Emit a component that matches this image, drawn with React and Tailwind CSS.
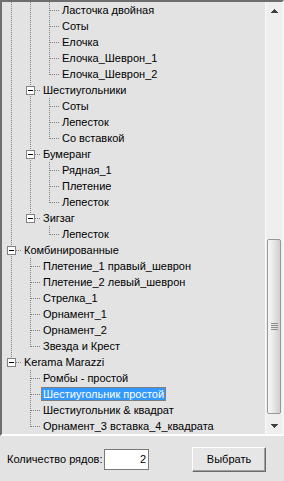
const rows = [
  [2, "Ласточка двойная", [1, 1], "mid"],
  [2, "Соты", [1, 1], "mid"],
  [2, "Елочка", [1, 1], "mid"],
  [2, "Елочка_Шеврон_1", [1, 1], "mid"],
  [2, "Елочка_Шеврон_2", [1, 1], "last"],
  [1, "Шестиугольники", [1], "mid", true],
  [2, "Соты", [1, 1], "mid"],
  [2, "Лепесток", [1, 1], "mid"],
  [2, "Со вставкой", [1, 1], "last"],
  [1, "Бумеранг", [1], "mid", true],
  [2, "Рядная_1", [1, 1], "mid"],
  [2, "Плетение", [1, 1], "mid"],
  [2, "Лепесток", [1, 1], "last"],
  [1, "Зигзаг", [1], "last", true],
  [2, "Лепесток", [1, 0], "last"],
  [0, "Комбинированные", [], "mid", true],
  [1, "Плетение_1 правый_шеврон", [1], "mid"],
  [1, "Плетение_2 левый_шеврон", [1], "mid"],
  [1, "Стрелка_1", [1], "mid"],
  [1, "Орнамент_1", [1], "mid"],
  [1, "Орнамент_2", [1], "mid"],
  [1, "Звезда и Крест", [1], "last"],
  [0, "Kerama Marazzi", [], "last", true],
  [1, "Ромбы - простой", [0], "mid"],
  [1, "Шестиугольник простой", [0], "mid"],
  [1, "Шестиугольник & квадрат", [0], "mid"],
  [1, "Орнамент_3 вставка_4_квадрата", [0], "last"],
];

const SELECTED = 24;

// one 19x16 column of the tree's dotted guide lines
function Guide({ type, box }) {
  const dot = { stroke: "#808080", strokeDasharray: "1 1" };
  return (
    <svg width="19" height="16" className="shrink-0" shapeRendering="crispEdges">
      {(type === "line" || type === "mid") && (
        <line x1="9.5" y1="0" x2="9.5" y2="16" {...dot} />
      )}
      {type === "last" && <line x1="9.5" y1="0" x2="9.5" y2="9" {...dot} />}
      {(type === "mid" || type === "last") && (
        <line x1="10" y1="8.5" x2="19" y2="8.5" {...dot} />
      )}
      {box && (
        <>
          <rect x="5.5" y="4.5" width="8" height="8" fill="#fff" stroke="#808080" />
          <line x1="7" y1="8.5" x2="12" y2="8.5" stroke="#000" />
        </>
      )}
    </svg>
  );
}

function Arrow({ down }) {
  return (
    <svg width="7" height="4" viewBox="0 0 7 4" shapeRendering="crispEdges">
      <path
        d={down ? "M0 0h7v1H6v1H5v1H4v1H3V3H2V2H1V1H0z" : "M3 0h1v1h1v1h1v1h1v1H0V3h1V2h1V1h1z"}
        fill="#404040"
      />
    </svg>
  );
}

export default function App() {
  return (
    <div className="w-[284px] h-[481px] bg-[#e3e3e3] flex flex-col text-[11px] text-black font-['Liberation_Sans',sans-serif]">
      {/* Tree view */}
      <div className="h-[436px] flex border-2 border-t-[#6e6e6e] border-l-[#6e6e6e] border-b-white border-r-[#f4f4f4]">
        <div className="w-[263px] flex flex-col overflow-hidden">
          {rows.map(([depth, text, guides, type, box], i) => (
            <div key={i} className="h-4 flex items-center shrink-0">
              {guides.map((g, j) => (
                <Guide key={j} type={g ? "line" : "none"} />
              ))}
              <Guide type={type} box={box} />
              <span
                className={
                  "ml-px px-px border leading-[12px] whitespace-nowrap " +
                  (i === SELECTED
                    ? "bg-[#3399ff] text-white border-dotted border-[#cc6600]"
                    : "border-transparent")
                }
              >
                {text}
              </span>
            </div>
          ))}
        </div>

        {/* Scrollbar */}
        <div className="w-[17px] flex flex-col bg-[#efefef] border-l border-l-[#f8f8f8]">
          <div className="h-[17px] flex items-center justify-center pt-px">
            <Arrow />
          </div>
          <div className="h-[220px]" />
          <div className="h-[175px] mx-px rounded-[2px] border border-[#979797] bg-linear-to-r from-[#f7f7f7] via-[#e6e6e6] to-[#cfcfcf] flex flex-col items-center justify-center gap-px">
            <div className="w-[7px] h-px bg-[#8c8c8c]" />
            <div className="w-[7px] h-px bg-[#8c8c8c]" />
            <div className="w-[7px] h-px bg-[#8c8c8c]" />
            <div className="w-[7px] h-px bg-[#8c8c8c]" />
          </div>
          <div className="flex-1" />
          <div className="h-[17px] flex items-center justify-center">
            <Arrow down />
          </div>
        </div>
      </div>

      {/* Bottom panel */}
      <div className="flex-1 flex items-center pt-[2px] pl-[7px]">
        <span className="w-[97px] whitespace-nowrap">Количество рядов:</span>
        <div className="w-[45px] h-[21px] bg-white border border-[#7a7a7a] flex items-center justify-end pr-[2px]">
          2
        </div>
        <button className="ml-[43px] w-[74px] h-[25px] bg-[#e6e6e6] border border-t-white border-l-white border-b-[#6a6a6a] border-r-[#6a6a6a] shadow-[inset_-1px_-1px_0_#a0a0a0] flex items-center justify-center">
          Выбрать
        </button>
      </div>
    </div>
  );
}
